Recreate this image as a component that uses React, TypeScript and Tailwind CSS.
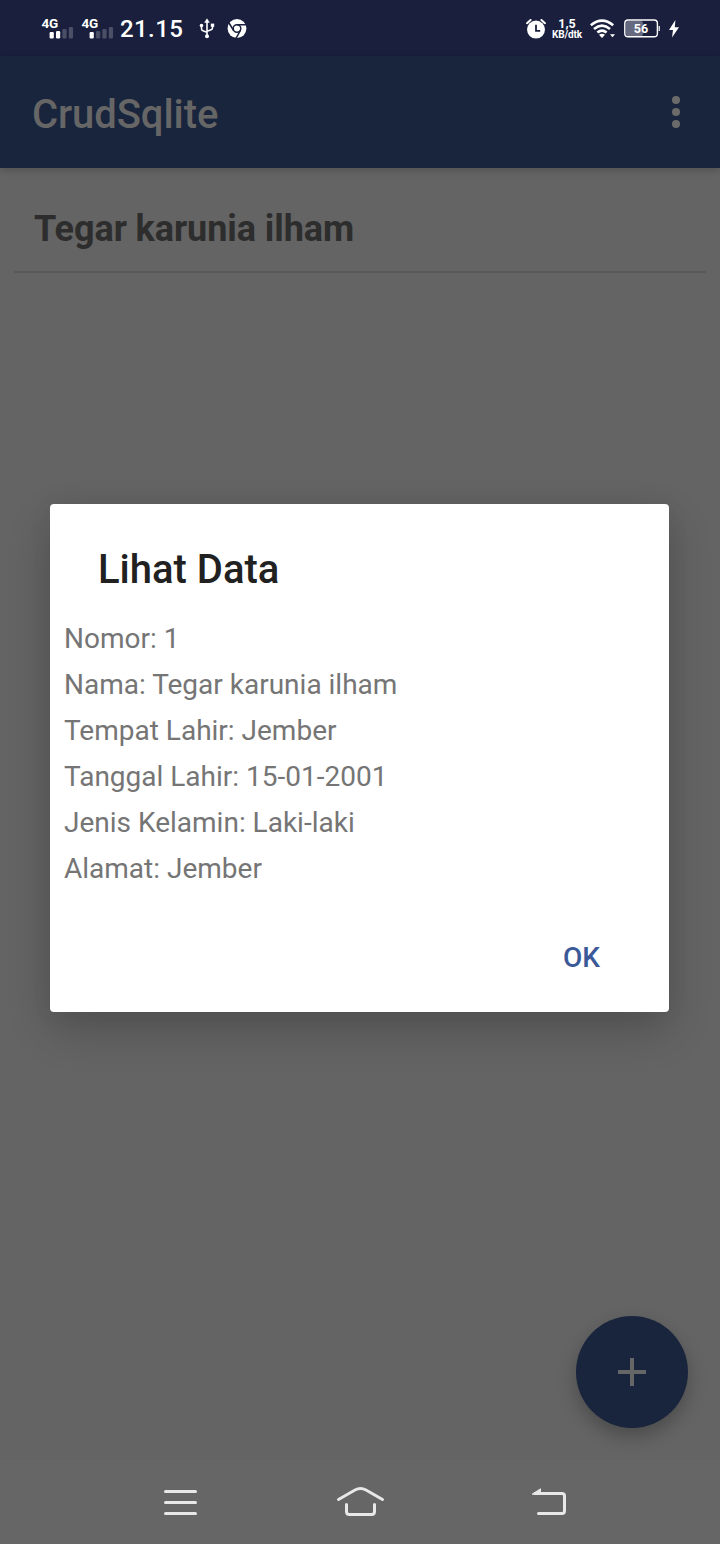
import type { ReactNode } from "react";

const details: [string, string][] = [
  ["Nomor", "1"],
  ["Nama", "Tegar karunia ilham"],
  ["Tempat Lahir", "Jember"],
  ["Tanggal Lahir", "15-01-2001"],
  ["Jenis Kelamin", "Laki-laki"],
  ["Alamat", "Jember"],
];

function Signal({ level, className }: { level: number; className: string }) {
  const bars = [
    { x: 8, y: 14.5, h: 6.5 },
    { x: 14.4, y: 13.5, h: 7.5 },
    { x: 20.8, y: 11.5, h: 9.5 },
    { x: 27.2, y: 9.5, h: 11.5 },
  ];
  return (
    <div className={`relative h-[22px] w-8 shrink-0 ${className}`}>
      <svg viewBox="0 0 32 22" className="h-[22px] w-8" fill="#fff">
        {bars.map((b, i) => (
          <rect key={b.x} x={b.x - 0.4} y={b.y - 0.5} width="4.2" height={b.h} rx="1.2" opacity={i < level ? 1 : 0.22} />
        ))}
      </svg>
      <span className="absolute top-[-2px] left-[-0.5px] text-[13.5px] leading-[14px] font-bold tracking-[-0.3px]">4G</span>
    </div>
  );
}

function UsbIcon() {
  return (
    <svg viewBox="0 0 16 22" className="ml-[15px] h-[22px] w-4 shrink-0" fill="#fff" stroke="#fff">
      <path d="M8 3v15M2.5 7.5v3.2Q2.5 12.5 4.5 13L8 14.2M13.5 7v2.7Q13.5 11.5 11.5 12L8 13.2" fill="none" strokeWidth="1.6" />
      <path d="M8 .8l2.4 3.6H5.6z" strokeWidth=".5" />
      <circle cx="8" cy="18.2" r="2" stroke="none" />
      <circle cx="2.5" cy="7.5" r="1.8" stroke="none" />
      <rect x="11.8" y="5.6" width="3.4" height="3.2" stroke="none" />
    </svg>
  );
}

function ChromeIcon() {
  return (
    <svg viewBox="0 0 20 20" className="ml-[12px] size-5 shrink-0">
      <circle cx="10" cy="9.5" r="9.4" fill="#fff" />
      <g stroke="#191f3d" strokeWidth="1.5" fill="none">
        <circle cx="10" cy="9.5" r="3.8" />
        <path d="M10 5.7h9M6.6 11.5L2 4M13.4 11.5L9 19.4" />
      </g>
    </svg>
  );
}

function AlarmIcon() {
  return (
    <svg viewBox="0 0 20 20" className="size-5 shrink-0">
      <circle cx="10" cy="10.6" r="9" fill="#fff" />
      <path d="M1 4.2L4.6 1M19 4.2L15.4 1" stroke="#fff" strokeWidth="2" strokeLinecap="round" />
      <path d="M10 5.8v6h4.2" stroke="#191f3d" strokeWidth="1.8" fill="none" />
    </svg>
  );
}

function WifiIcon() {
  return (
    <svg viewBox="0 0 26 20" className="ml-[7px] h-5 w-[26px] shrink-0" fill="none" stroke="#fff" strokeWidth="2.6">
      <path d="M.8 6.2Q12 -3 23.2 6.2M4 10Q12 3.4 20 10M7.4 13.6Q12 9.6 16.6 13.6" />
      <path d="M9 15.8Q12 13.6 15 15.8L12 19z" fill="#fff" stroke="none" />
      <path d="M20 15.2h5l-2.5 3z" fill="#fff" stroke="none" />
    </svg>
  );
}

function Battery() {
  return (
    <div className="relative ml-[8px] h-[19px] w-9 shrink-0">
      <svg viewBox="0 0 36 19" className="h-[19px] w-9">
        <rect x="2" y="2" width="17" height="15" rx="2" fill="#666a80" />
        <rect x=".8" y="1" width="32.6" height="16.8" rx="3.4" fill="none" stroke="#fff" strokeWidth="1.4" />
        <path d="M35.2 7v5" stroke="#fff" strokeWidth="1.2" />
      </svg>
      <span className="absolute inset-x-0 top-[3px] pr-[2px] text-center text-[12.5px] leading-[14px] font-bold">56</span>
    </div>
  );
}

function StatusBar() {
  return (
    <div className="flex h-14 items-center bg-[#191f3d] pt-px text-white">
      <div className="flex items-center">
        <Signal level={2} className="ml-[42px]" />
        <Signal level={1} className="ml-2" />
        <span className="ml-[6px] w-[64px] pt-px text-[24px] leading-7 font-medium tracking-[0.4px] whitespace-nowrap">21.15</span>
        <UsbIcon />
        <ChromeIcon />
      </div>
      <div className="mr-[40px] ml-auto flex items-center">
        <AlarmIcon />
        <div className="ml-[5px] w-[32px] text-center font-bold whitespace-nowrap">
          <div className="text-[12.5px] leading-[11px]">1,5</div>
          <div className="text-[10px] leading-[11px] tracking-[-0.1px]">KB/dtk</div>
        </div>
        <WifiIcon />
        <Battery />
        <svg viewBox="0 0 12 18" className="ml-[8px] h-[18px] w-3 shrink-0" fill="#fff">
          <path d="M7.4 0L1 10h4L4 17.6l7-10.3H6.8z" />
        </svg>
      </div>
    </div>
  );
}

function NavIcon({ className, children }: { className: string; children: ReactNode }) {
  return (
    <svg viewBox="0 0 50 36" className={`h-9 w-[50px] shrink-0 ${className}`} fill="none" stroke="#e8e8e8" strokeWidth="3" strokeLinecap="round">
      {children}
    </svg>
  );
}

export default function App() {
  return (
    <div className="relative flex h-[1544px] w-[720px] flex-col overflow-hidden bg-[#646464] font-[Roboto,sans-serif]">
      <StatusBar />
      <header className="flex h-28 items-center justify-between bg-[#19243d] pr-[40px] pl-8 text-[#666] shadow-[0_2px_8px_rgba(0,0,0,0.2)]">
        <h1 className="pt-[5px] text-[40px] leading-[48px] font-medium tracking-[-0.08px]">CrudSqlite</h1>
        <svg viewBox="0 0 8 32" className="h-8 w-2" fill="#6b6b69">
          <circle cx="4" cy="4" r="4" />
          <circle cx="4" cy="16" r="4" />
          <circle cx="4" cy="28" r="4" />
        </svg>
      </header>
      <main className="flex flex-1 flex-col justify-between">
        <div className="mx-[14px] border-b-2 border-[#585858] pt-9 pb-[17px] pl-5 text-[36px] leading-[50px] font-bold tracking-[-0.08px] text-[#2d2d2d]">
          Tegar karunia ilham
        </div>
        <button className="mr-8 mb-8 flex size-28 items-center justify-center self-end rounded-full bg-[#19243d] shadow-[0_8px_18px_rgba(0,0,0,0.25)]">
          <svg viewBox="0 0 28 28" className="size-7" stroke="#666" strokeWidth="4">
            <path d="M14 0v28M0 14h28" />
          </svg>
        </button>
      </main>
      <nav className="flex h-[84px] items-center bg-[#666]">
        <NavIcon className="ml-[155px]">
          <path d="M10.5 7.5h30M10.5 18.5h30M10.5 29.5h30" />
        </NavIcon>
        <NavIcon className="ml-[130px]">
          <path d="M3.5 15.5L20 6Q25.5 3 31 6L47.5 15.5M11.5 20.5V27.5Q11.5 30.5 14.5 30.5H36.5Q39.5 30.5 39.5 27.5V20.5" />
        </NavIcon>
        <NavIcon className="ml-[140px]">
          <path d="M10 9.5H37Q39.5 9.5 39.5 12V27Q39.5 29.5 37 29.5H13.5" />
          <path d="M7.5 10L15.5 4.8V10z" fill="#e8e8e8" strokeWidth="1" strokeLinejoin="round" />
        </NavIcon>
      </nav>

      <section
        role="dialog"
        className="absolute top-[504px] left-[50px] flex h-[508px] w-[619px] flex-col rounded-[4px] bg-white shadow-[0_18px_44px_rgba(0,0,0,0.2),0_0_24px_rgba(0,0,0,0.05)]"
      >
        <h2 className="pt-[42px] pl-12 text-[40px] leading-[48px] font-medium text-[#212121]">Lihat Data</h2>
        <div className="mt-[22px] pl-[14px] text-[28px] leading-[46px] text-[#757575]">
          {details.map(([label, value]) => (
            <p key={label}>{`${label}: ${value}`}</p>
          ))}
        </div>
        <button className="mt-auto mr-[69px] mb-[36px] self-end text-[28px] leading-[36px] font-medium text-[#3b5998]">OK</button>
      </section>
    </div>
  );
}
